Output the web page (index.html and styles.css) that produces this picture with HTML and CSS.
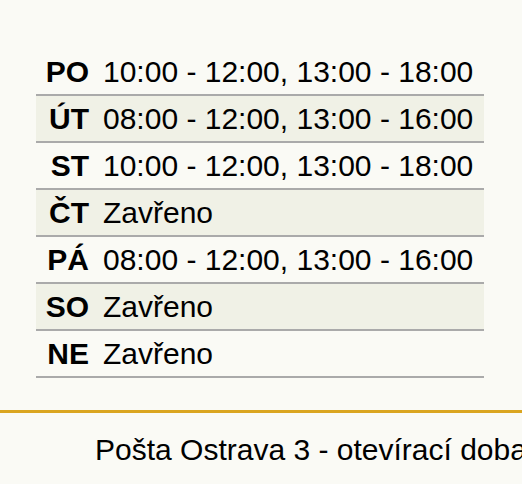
FILE: index.html
```html
<!DOCTYPE html>
<html lang="cs">
<head>
<meta charset="utf-8">
<link rel="stylesheet" href="styles.css">
</head>
<body>
<div class="page">
  <div class="hours">
    <div class="row"><span class="day">PO</span><span class="time">10:00 - 12:00, 13:00 - 18:00</span></div>
    <div class="row alt"><span class="day">ÚT</span><span class="time">08:00 - 12:00, 13:00 - 16:00</span></div>
    <div class="row"><span class="day">ST</span><span class="time">10:00 - 12:00, 13:00 - 18:00</span></div>
    <div class="row alt"><span class="day">ČT</span><span class="time">Zavřeno</span></div>
    <div class="row"><span class="day">PÁ</span><span class="time">08:00 - 12:00, 13:00 - 16:00</span></div>
    <div class="row alt"><span class="day">SO</span><span class="time">Zavřeno</span></div>
    <div class="row"><span class="day">NE</span><span class="time">Zavřeno</span></div>
  </div>
  <div class="footer">Pošta Ostrava 3 - otevírací doba</div>
</div>
</body>
</html>
```
FILE: styles.css
```css
html, body {
  margin: 0;
  padding: 0;
  background: #fafaf5;
}
body {
  font-family: "Liberation Sans", Arial, sans-serif;
  color: #000;
  width: 522px;
  height: 484px;
  overflow: hidden;
}
.page {
  padding-top: 49px;
}
.hours {
  margin-left: 36px;
  width: 448px;
}
.row {
  display: grid;
  grid-template-columns: 60px 1fr;
  align-items: center;
  height: 45px;
  border-bottom: 2px solid #aaaaaa;
  font-size: 30px;
}
.row.alt {
  background: #f0f1e6;
}
.day {
  font-weight: bold;
  text-align: right;
  padding-right: 7px;
}
.time {
  padding-left: 7px;
  white-space: nowrap;
}
.footer {
  margin-top: 32px;
  border-top: 3px solid #daa520;
  padding: 20px 0 0 95px;
  font-size: 30px;
  white-space: nowrap;
  overflow: hidden;
}
```
